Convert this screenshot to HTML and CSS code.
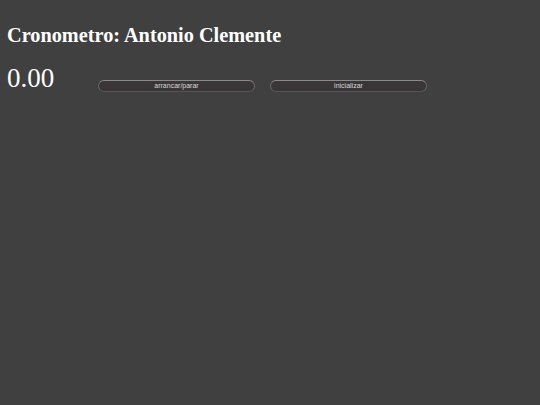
FILE: index.html
```html
<!DOCTYPE html>
<html>
<head>
<meta charset="utf-8">
<link rel="stylesheet" href="styles.css">
</head>
<body>
<h1 class="title">Cronometro: Antonio Clemente</h1>
<div class="row">
  <span class="time">0.00</span>
  <button class="btn btn-first">arrancar/parar</button>
  <button class="btn">inicializar</button>
</div>
</body>
</html>
```
FILE: styles.css
```css
html, body {
  background: #404040;
}
body {
  margin: 0;
  padding: 0 7px;
  font-family: "Liberation Serif", serif;
  color: #fff;
}
.title {
  margin: 0;
  padding-top: 23px;
  font-size: 20.3px;
  font-weight: bold;
  line-height: 24px;
}
.row {
  display: flex;
  align-items: flex-start;
  margin-top: 16px;
}
.time {
  font-size: 27px;
  line-height: 30px;
  width: 91px;
}
.btn {
  margin-top: 17px;
  width: 157px;
  height: 12px;
  padding: 0;
  border: 1px solid #6a6a6a;
  border-top-color: #8a8a8a;
  border-bottom-color: #555;
  border-radius: 6px;
  background: #3a3536;
  color: #d8d8d8;
  font-family: "Liberation Sans", sans-serif;
  font-size: 7px;
  line-height: 10px;
}
.btn-first {
  margin-right: 15px;
}
```
